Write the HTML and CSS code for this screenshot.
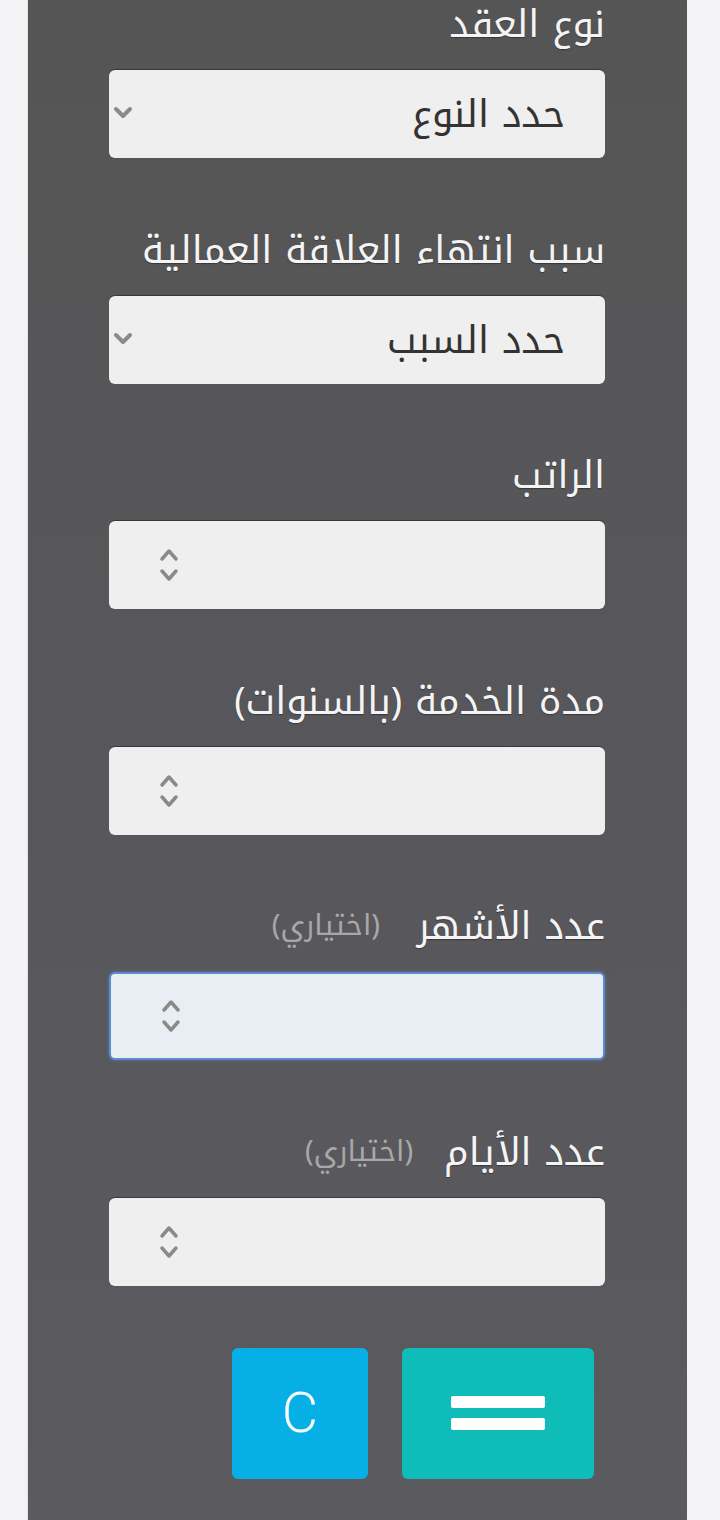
FILE: index.html
```html
<!DOCTYPE html>
<html lang="ar">
<head>
<meta charset="utf-8">
<link rel="stylesheet" href="styles.css">
</head>
<body>
<div class="page">
  <div class="panel" dir="rtl">
    <div class="group">
      <label class="label">نوع العقد</label>
      <div class="field select">
        <span class="value">حدد النوع</span>
        <svg class="chev" viewBox="0 0 20 14" width="20" height="14"><path d="M3 3 L10 10 L17 3" fill="none" stroke="#8a8a8a" stroke-width="4" stroke-linecap="round" stroke-linejoin="round"/></svg>
      </div>
    </div>
    <div class="group">
      <label class="label">سبب انتهاء العلاقة العمالية</label>
      <div class="field select">
        <span class="value">حدد السبب</span>
        <svg class="chev" viewBox="0 0 20 14" width="20" height="14"><path d="M3 3 L10 10 L17 3" fill="none" stroke="#8a8a8a" stroke-width="4" stroke-linecap="round" stroke-linejoin="round"/></svg>
      </div>
    </div>
    <div class="group">
      <label class="label">الراتب</label>
      <div class="field number">
        <svg class="spin" viewBox="0 0 24 42" width="24" height="42"><path d="M5 15 L12 7 L19 15 M5 27 L12 35 L19 27" fill="none" stroke="#8a8a8a" stroke-width="3.5" stroke-linecap="round" stroke-linejoin="round"/></svg>
      </div>
    </div>
    <div class="group">
      <label class="label">مدة الخدمة (بالسنوات)</label>
      <div class="field number">
        <svg class="spin" viewBox="0 0 24 42" width="24" height="42"><path d="M5 15 L12 7 L19 15 M5 27 L12 35 L19 27" fill="none" stroke="#8a8a8a" stroke-width="3.5" stroke-linecap="round" stroke-linejoin="round"/></svg>
      </div>
    </div>
    <div class="group">
      <label class="label">عدد الأشهر <span class="opt">(اختياري)</span></label>
      <div class="field number focused">
        <svg class="spin" viewBox="0 0 24 42" width="24" height="42"><path d="M5 15 L12 7 L19 15 M5 27 L12 35 L19 27" fill="none" stroke="#8a8a8a" stroke-width="3.5" stroke-linecap="round" stroke-linejoin="round"/></svg>
      </div>
    </div>
    <div class="group">
      <label class="label">عدد الأيام <span class="opt opt-near">(اختياري)</span></label>
      <div class="field number">
        <svg class="spin" viewBox="0 0 24 42" width="24" height="42"><path d="M5 15 L12 7 L19 15 M5 27 L12 35 L19 27" fill="none" stroke="#8a8a8a" stroke-width="3.5" stroke-linecap="round" stroke-linejoin="round"/></svg>
      </div>
    </div>
    <div class="buttons">
      <button class="btn equals"><span class="bar"></span><span class="bar"></span></button>
      <button class="btn clear">C</button>
    </div>
  </div>
</div>
</body>
</html>
```
FILE: styles.css
```css
html, body {
  margin: 0;
  padding: 0;
  background: #f3f3f5;
  height: 1520px;
  overflow: hidden;
}
.page {
  padding-left: 27px;
  width: 660px;
}
.panel {
  direction: rtl;
  width: 660px;
  height: 1540px;
  background: linear-gradient(#555555, #58575c 60%, #5b5a5f);
  border-radius: 0 0 22px 22px;
  border-left: 1px solid #e2e2e2;
  box-sizing: border-box;
  padding: 0 82px 0 0;
  font-family: "Noto Kufi Arabic", "Noto Sans Arabic", "DejaVu Sans", sans-serif;
}
.group {
  display: flex;
  flex-direction: column;
  align-items: stretch;
  width: 496px;
  margin-bottom: 67.5px;
}
.label {
  display: block;
  height: 48px;
  line-height: 48px;
  margin-bottom: 22px;
  color: #f4f4f4;
  font-size: 38px;
  text-shadow: 0 1px 1px rgba(0,0,0,0.35);
  white-space: nowrap;
}
.opt {
  font-size: 29px;
  color: #a8a8a8;
  margin-right: 24px;
  text-shadow: none;
  vertical-align: 4px;
}
.opt-near {
  margin-right: 18px;
}
.field {
  height: 88px;
  box-sizing: border-box;
  background: #efefef;
  border-radius: 6px;
  display: flex;
  align-items: center;
  position: relative;
  box-shadow: 0 -1px 0 rgba(0,0,0,0.35);
}
.select .value {
  padding-right: 40px;
  font-size: 38px;
  color: #333;
  flex: 1;
}
.select .chev {
  margin-left: 4px;
  margin-top: -2px;
}
.number {
  justify-content: flex-end;
}
.spin {
  margin-left: 48px;
}
.focused {
  background: #e9eef5;
  border: 2px solid #5c8ccc;
  box-shadow: 0 0 4px rgba(90,140,210,0.6);
}
.buttons {
  display: flex;
  gap: 34px;
  width: 496px;
  padding-right: 11px;
  box-sizing: border-box;
  margin-top: -5.5px;
}
.btn {
  height: 131px;
  border: none;
  border-radius: 6px;
  display: flex;
  align-items: center;
  justify-content: center;
  flex-direction: column;
  padding: 0;
}
.equals {
  width: 192px;
  background: #0ebdb7;
  gap: 10px;
}
.equals .bar {
  display: block;
  width: 94px;
  height: 12px;
  background: #ffffff;
  border-radius: 2px;
}
.clear {
  width: 136px;
  background: #06afe6;
  color: #f6fbff;
  font-family: Roboto, "Liberation Sans", sans-serif;
  font-size: 56px;
  font-weight: 300;
}
```
